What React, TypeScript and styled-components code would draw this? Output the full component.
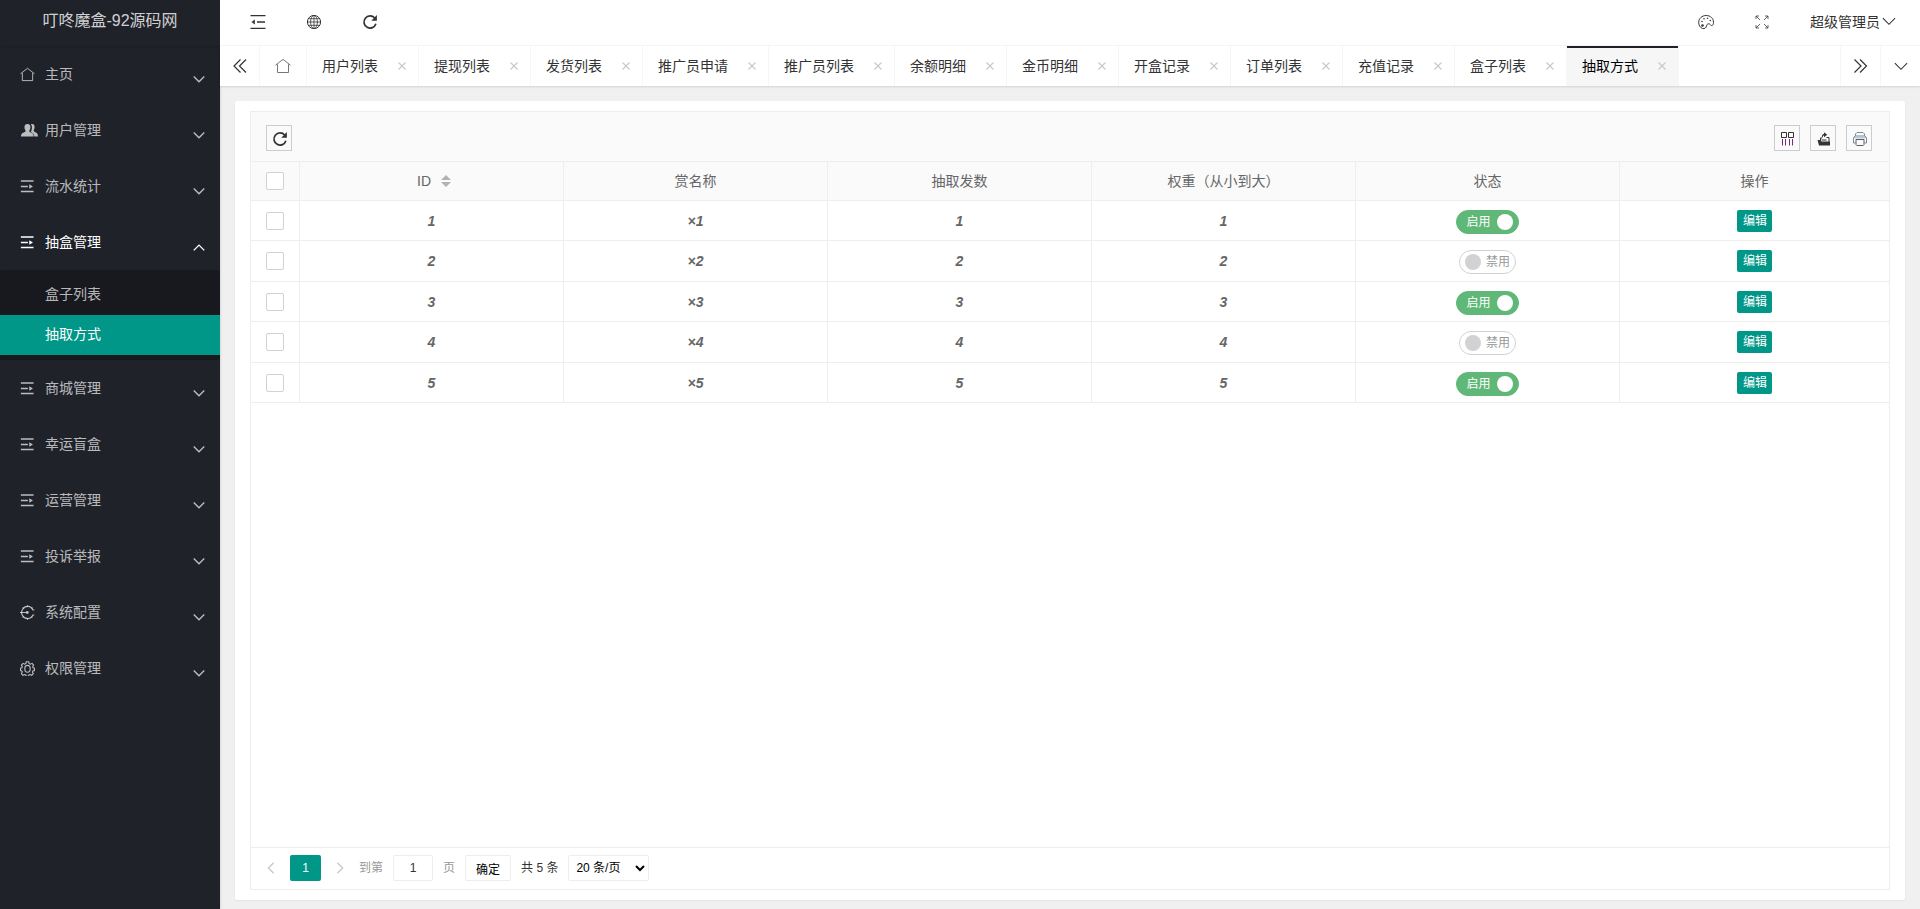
import React, { useState } from "react";
import styled, { createGlobalStyle, css } from "styled-components";

const teal = "#009688";
const dark = "#20222a";
const line = "#eeeeee";

const GlobalStyle = createGlobalStyle`
  * { box-sizing: border-box; }
  body {
    margin: 0;
    background: #f0f0f0;
    color: #333;
    font: 14px/24px "Liberation Sans", "Noto Sans CJK SC", sans-serif;
  }
  button, input, select { font-family: inherit; margin: 0; }
  button { padding: 0; border: 0; background: none; color: inherit; cursor: pointer; }
  a { color: inherit; text-decoration: none; }
  svg { display: block; flex: none; }
`;

/* ---------- icons ---------- */

type IconProps = { size?: number };

const Svg = ({ size = 16, children }: IconProps & { children: React.ReactNode }) => (
  <svg width={size} height={size} viewBox="0 0 16 16" fill="none" stroke="currentColor" aria-hidden="true">
    {children}
  </svg>
);

const HomeIcon = ({ size = 16 }: IconProps) => (
  <Svg size={size}>
    <path d="M.5 7.200 8 1.400l7.500 5.800M2.500 6.200V14.500h11V6.200" strokeWidth="1" />
  </Svg>
);
const UsersIcon = () => (
  <svg width="18" height="14" viewBox="0 0 18 14" fill="currentColor" aria-hidden="true">
    <path d="M10.900 1.300c2.200-.9 3.900.5 3.700 2.900-.1 1.400-.4 2-.8 2.700-.3 1 .2 1.700 1.500 2.300 1.700.7 2.600 1.500 2.700 4.300h-3.700c-.2-2-.6-3.100-2.500-4-.8-.4-1-.9-.6-1.600 1-1.800 1.200-4.600-.3-6.600z" />
    <path d="M7.500.9c2.200 0 3.200 1.600 2.900 3.800-.1 1.300-.5 1.900-1 2.700-.3 1 .2 1.500 1.400 2 2.100.8 2.800 1.400 2.900 4.100H1c0-2.700.8-3.400 2.900-4.100 1.300-.5 1.900-1 1.600-2-.5-.8-.9-1.400-1-2.700C4.200 2.500 5.300.9 7.500.9z" />
  </svg>
);
const ListIcon = () => (
  <Svg size={14}>
    <path d="M1 2.300h14.500M1 8.500h8M1 14.300h14.500" strokeWidth="1.600" />
    <path d="M10.600 5.900 14.800 8.500l-4.200 2.600z" fill="currentColor" stroke="none" />
  </Svg>
);
const ConfigIcon = () => (
  <Svg size={15}>
    <path d="M13.800 5A6.300 6.300 0 0 0 2.600 4.800C2 5.800 1.700 6.800 1.700 8c0 1.200.3 2.200.9 3.200A6.300 6.300 0 0 0 13.800 11" strokeWidth="1.200" />
    <path d="M0 8h7" strokeWidth="1.100" />
    <circle cx="7.800" cy="8" r="1.500" fill="currentColor" stroke="none" />
    <path d="M8 .3v1.500M8 14.200v1.500M3 2.600l1 1.200M13 2.600l-1 1.200M3 13.400l1-1.200M13 13.400l-1-1.200M13 5.300h2.300M13 10.700h2.300" strokeWidth="1" />
  </Svg>
);
const GearIcon = () => (
  <Svg size={15}>
    <path
      d="M6.700.8h2.600l.5 2 1.200.6 1.900-.9 1.600 1.900-1 1.700.4 1.200 1.500.4v2.400l-1.700.5-.4 1.300.9 1.700-1.700 1.700-1.700-.9-1.300.5-.5 1.500H6.700l-.5-1.500-1.200-.5-1.800.9-1.700-1.700.9-1.800-.4-1.200-1.500-.5V7.700L2 7.300l.4-1.300-.9-1.700 1.700-1.800 1.700.9 1.300-.6z"
      strokeWidth="1.200"
    />
    <ellipse cx="8" cy="8.300" rx="2.900" ry="3.700" strokeWidth="1.200" />
  </Svg>
);
const Chevron = ({ size = 12, dir = "down" }: IconProps & { dir?: "down" | "up" | "left" | "right" }) => {
  const d = {
    down: "M1 4.800 8 11.800l7-7",
    up: "M1 12.500l7-7 7 7",
    left: "M11.500 1 4.500 8l7 7",
    right: "M4.500 1l7 7-7 7",
  }[dir];
  return (
    <Svg size={size}>
      <path d={d} strokeWidth={size > 12 ? 1.2 : 1.800} />
    </Svg>
  );
};
const DoubleChevron = ({ flip }: { flip?: boolean }) => (
  <Svg>
    <path d={flip ? "M1.500 1.500 8 8l-6.500 6.500M7 1.500 13.500 8 7 14.500" : "M8.500 1.500 2 8l6.500 6.500M14 1.500 7.500 8l6.500 6.500"} strokeWidth="1.200" />
  </Svg>
);
const FoldIcon = () => (
  <Svg>
    <path d="M.5 1.700h15M7 8h8M.5 14.300h15" strokeWidth="1.300" />
    <path d="M4.800 5.600v4.800L1.500 8z" fill="currentColor" stroke="none" />
  </Svg>
);
const GlobeIcon = () => (
  <Svg>
    <circle cx="8" cy="8" r="6.600" strokeWidth="1" />
    <ellipse cx="8" cy="8" rx="3.400" ry="6.600" strokeWidth=".8" />
    <path d="M8 1.400v13.200M1.400 8h13.200M2.300 4.700h11.400M2.300 11.300h11.400" strokeWidth=".8" />
  </Svg>
);
const RefreshIcon = () => (
  <Svg>
    <path d="M12.700 4A6.100 6.100 0 1 0 13.900 9.800" strokeWidth="1.700" />
    <path d="M14.900 1v5.800H9.300z" fill="currentColor" stroke="none" />
  </Svg>
);
const PaletteIcon = () => (
  <Svg>
    <path d="M4.500 14.500C2 13.500.6 11 .7 8.300.8 4.400 4 1.500 8.200 1.500c4.300 0 7.300 3 7.300 6.700 0 2.300-.8 3.500-1.800 3.400-1.300-.1-1.400-1.800-3-1.800-1.500 0-1.800.9-2.200 2.100-.5 1.900-1.600 3.300-4 2.600z" strokeWidth="1" />
    <g fill="currentColor" stroke="none">
      <circle cx="4.500" cy="11.500" r="1.300" />
      <circle cx="4" cy="7.500" r=".8" />
      <circle cx="6" cy="4.800" r=".8" />
      <circle cx="9.500" cy="4.300" r=".8" />
      <circle cx="12.300" cy="6.500" r=".8" />
    </g>
  </Svg>
);
const FullscreenIcon = () => (
  <Svg>
    <path d="M2 5V2h3M11 2h3v3M14 11v3h-3M5 14H2v-3M2 2l4 4M14 2l-4 4M14 14l-4-4M2 14l4-4" strokeWidth="1" opacity=".75" />
  </Svg>
);
const CloseIcon = () => (
  <Svg size={8}>
    <path d="M1 1l14 14M15 1 1 15" strokeWidth="2.200" />
  </Svg>
);
const ColumnsIcon = () => (
  <Svg>
    <path d="M1.500 1.500h5v5h-5zM8.500 1.500h5v5h-5z" strokeWidth="1" />
    <path d="M2.500 8v6.500M5.500 8v6.500M9.500 8v6.500M12.500 8v6.500" strokeWidth="1" stroke="#7a2a7a" />
  </Svg>
);
const ExportIcon = () => (
  <Svg>
    <path d="M1.500 9h3l1 1.500h8.500V14.500H3z" fill="currentColor" stroke="none" />
    <path d="M4.500 9.500V7H6M10.500 6.500h2.500V11M5.500 9h5" strokeWidth="1" />
    <path d="M5.800 6.500C5.800 4 6.500 3 8 2.900V1.200l3.200 2.600L8 6.200V4.600c-1 .1-1.300.8-1.200 1.900z" fill="currentColor" stroke="none" />
  </Svg>
);
const PrintIcon = () => (
  <Svg>
    <path d="M3.500 5V3L5 1.500h6L12.500 3v2M3.500 12H1.500V6.500L3 5h10l1.500 1.500V12h-2" strokeWidth="1" stroke="#7d8893" />
    <path d="M4 8.500h8v5.200l-.8.800H4.800l-.8-.8z" strokeWidth="1" stroke="#555d66" />
    <path d="M1.500 6.800h13" strokeWidth="1" stroke="#9db4ca" />
  </Svg>
);
const SortIcon = () => (
  <svg width="10" height="14" viewBox="0 0 10 14" fill="#b2b2b2" aria-hidden="true">
    <path d="M5 1l5 5H0zM5 13l5-5H0z" />
  </svg>
);

/* ---------- layout ---------- */

const Shell = styled.div`
  display: flex;
  min-height: 100vh;
`;

const Sidebar = styled.aside`
  flex: none;
  width: 220px;
  background: ${dark};
  color: rgba(255, 255, 255, 0.7);
  box-shadow: 1px 0 2px rgba(0, 0, 0, 0.1);
`;

const Brand = styled.div`
  height: 46px;
  padding-bottom: 4px;
  display: flex;
  align-items: center;
  justify-content: center;
  font-size: 16px;
  color: rgba(255, 255, 255, 0.8);
  box-shadow: 0 1px 2px rgba(0, 0, 0, 0.15);
`;

const MenuButton = styled.button<{ $open?: boolean }>`
  width: 100%;
  height: 56px;
  padding: 0 15px 0 20px;
  display: grid;
  grid-template-columns: 25px 1fr auto;
  align-items: center;
  text-align: left;
  font-size: 14px;
  color: ${(p) => (p.$open ? "#fff" : "inherit")};
`;

const MenuText = styled.span`
  padding-bottom: 2px;
`;

const MenuArrow = styled.span`
  padding-top: 10px;
`;

const SubMenu = styled.div`
  padding: 5px 0;
  border-radius: 2px;
  background: #18191f;
`;

const SubLink = styled.a<{ $active?: boolean }>`
  display: block;
  height: 40px;
  padding-left: 45px;
  line-height: 38px;
  ${(p) => p.$active && css`background: ${teal}; color: #fff;`}
`;

const Main = styled.div`
  flex: 1;
  min-width: 0;
  display: flex;
  flex-direction: column;
`;

const Header = styled.header`
  height: 46px;
  padding-left: 10px;
  padding-bottom: 1px;
  display: flex;
  align-items: center;
  background: #fff;
  border-bottom: 1px solid #f6f6f6;
`;

const HeaderButton = styled.button`
  width: 56px;
  height: 44px;
  display: grid;
  place-items: center;
`;

const Spacer = styled.div`
  flex: 1;
`;

const UserButton = styled.button`
  height: 44px;
  padding: 0 24px 2px 20px;
  display: flex;
  align-items: center;
  gap: 2px;
  font-size: 14px;
`;

const TabBar = styled.nav`
  height: 40px;
  display: flex;
  background: #fff;
  box-shadow: 0 1px 2px rgba(0, 0, 0, 0.12);
`;

const TabControl = styled.button<{ $side: "left" | "right" }>`
  flex: none;
  width: 40px;
  display: grid;
  place-items: center;
  ${(p) => (p.$side === "left" ? "border-right" : "border-left")}: 1px solid #f6f6f6;
`;

const HomeTab = styled.a`
  flex: none;
  width: 47px;
  display: grid;
  place-items: center;
  border-right: 1px solid #f6f6f6;
  color: #777;
`;

const Tabs = styled.div`
  flex: 1;
  min-width: 0;
  display: flex;
  overflow: hidden;
`;

const Tab = styled.div<{ $active?: boolean }>`
  flex: none;
  display: flex;
  align-items: center;
  gap: 16px;
  padding: 0 8px 0 15px;
  border-right: 1px solid #f6f6f6;
  ${(p) => p.$active && css`
    background: #f6f6f6;
    color: #000;
    box-shadow: inset 0 2px ${dark};
  `}
`;

const TabClose = styled.button`
  width: 16px;
  height: 16px;
  display: grid;
  place-items: center;
  color: #c8c8c8;
`;

const Content = styled.main`
  flex: 1;
  padding: 15px 15px 9px;
  display: flex;
`;

const Card = styled.section`
  flex: 1;
  min-width: 0;
  padding: 10px 15px;
  display: flex;
  background: #fff;
  border-radius: 2px;
  box-shadow: 0 1px 2px rgba(0, 0, 0, 0.05);
`;

const Panel = styled.div`
  flex: 1;
  min-width: 0;
  display: flex;
  flex-direction: column;
  border: 1px solid ${line};
`;

const Toolbar = styled.div`
  height: 50px;
  padding: 3px 17px 0 15px;
  display: flex;
  align-items: center;
  gap: 10px;
  background: #fafafa;
  border-bottom: 1px solid ${line};
`;

const ToolButton = styled.button`
  width: 26px;
  height: 26px;
  padding: 2px 0 0 2px;
  display: grid;
  place-items: center;
  border: 1px solid #ccc;
  color: #333;
`;

const Table = styled.table`
  width: 100%;
  table-layout: fixed;
  border-collapse: separate;
  border-spacing: 0;
  color: #666;
`;

const Th = styled.th<{ $width?: number }>`
  width: ${(p) => (p.$width ? `${p.$width}px` : "auto")};
  height: 39px;
  padding: 0;
  font-weight: 400;
  background: #fafafa;
  border: solid ${line};
  border-width: 0 1px 1px 0;
  &:last-child { border-right: 0; }
`;

const Tr = styled.tr`
  height: 40px;
  &:nth-child(even) { height: 41px; }
`;

const Td = styled.td`
  padding: 9px 0 0;
  text-align: center;
  vertical-align: top;
  line-height: 22px;
  border: solid ${line};
  border-width: 0 1px 1px 0;
  &:last-child { border-right: 0; }
`;

const Value = styled.em`
  display: block;
  font-weight: 700;
`;

const HeadCell = styled.div`
  display: flex;
  align-items: center;
  justify-content: center;
`;

const SortButton = styled.button`
  margin: 0 -5px 0 10px;
`;

const CheckCell = styled.div`
  display: flex;
  padding: 2px 0 0 15px;
  ${Th} & { padding-top: 0; }
`;

const Check = styled.input`
  appearance: none;
  width: 18px;
  height: 18px;
  border: 1px solid #d2d2d2;
  border-radius: 2px;
  background: #fff;
  &:checked { background: ${teal}; border-color: ${teal}; }
`;

const SwitchLabel = styled.label<{ $on: boolean }>`
  display: inline-flex;
  flex-direction: ${(p) => (p.$on ? "row" : "row-reverse")};
  align-items: center;
  gap: ${(p) => (p.$on ? 6 : 5)}px;
  height: 24px;
  padding: ${(p) => (p.$on ? "0 5px 0 9px" : "0 5px")};
  border: 1px solid ${(p) => (p.$on ? "#5fb878" : "#d2d2d2")};
  border-radius: 20px;
  background: ${(p) => (p.$on ? "#5fb878" : "#fff")};
  color: ${(p) => (p.$on ? "#fff" : "#999")};
  font-size: 12px;
  vertical-align: top;
  cursor: pointer;
`;

const SwitchInput = styled.input`
  appearance: none;
  width: 16px;
  height: 16px;
  border-radius: 50%;
  background: #d2d2d2;
  &:checked { background: #fff; }
`;

const EditButton = styled.button`
  height: 22px;
  padding: 0 5px 0 6px;
  border-radius: 2px;
  background: ${teal};
  color: #fff;
  font-size: 12px;
  line-height: 22px;
  vertical-align: top;
`;

const Pager = styled.footer`
  height: 42px;
  margin-top: auto;
  padding: 7px 1px;
  display: flex;
  align-items: flex-start;
  border-top: 1px solid ${line};
  font-size: 12px;
  line-height: 26px;
`;

const PagerArrow = styled.button`
  width: 38px;
  height: 26px;
  display: grid;
  place-items: center;
  color: #c8c8c8;
`;

const PageNumber = styled.button`
  width: 31px;
  height: 26px;
  border-radius: 2px;
  background: ${teal};
  color: #fff;
  font-size: 12px;
`;

const JumpLabel = styled.label`
  display: flex;
  gap: 10px;
  padding-right: 10px;
  color: #999;
`;

const JumpInput = styled.input`
  width: 40px;
  height: 26px;
  padding: 0;
  border: 1px solid ${line};
  border-radius: 2px;
  text-align: center;
  font-size: 12px;
  color: #333;
`;

const JumpButton = styled.button`
  height: 26px;
  padding: 0 10px;
  border: 1px solid ${line};
  border-radius: 2px;
  font-size: 12px;
  color: #000;
`;

const Total = styled.span`
  padding: 0 10px;
`;

const SizeSelect = styled.select`
  width: 81px;
  height: 26px;
  padding: 0 3px;
  border: 1px solid ${line};
  border-radius: 2px;
  background: #fff;
  color: #000;
  font-size: 12px;
`;

/* ---------- data ---------- */

type MenuEntry = { label: string; icon: React.ReactNode; children?: string[] };

const menu: MenuEntry[] = [
  { label: "主页", icon: <HomeIcon size={15} /> },
  { label: "用户管理", icon: <UsersIcon /> },
  { label: "流水统计", icon: <ListIcon /> },
  { label: "抽盒管理", icon: <ListIcon />, children: ["盒子列表", "抽取方式"] },
  { label: "商城管理", icon: <ListIcon /> },
  { label: "幸运盲盒", icon: <ListIcon /> },
  { label: "运营管理", icon: <ListIcon /> },
  { label: "投诉举报", icon: <ListIcon /> },
  { label: "系统配置", icon: <ConfigIcon /> },
  { label: "权限管理", icon: <GearIcon /> },
];

const current = "抽取方式";

const tabs = [
  "用户列表", "提现列表", "发货列表", "推广员申请", "推广员列表", "余额明细",
  "金币明细", "开盒记录", "订单列表", "充值记录", "盒子列表", current,
];

const rows = [
  { id: 1, enabled: true },
  { id: 2, enabled: false },
  { id: 3, enabled: true },
  { id: 4, enabled: false },
  { id: 5, enabled: true },
];

/* ---------- parts ---------- */

const StatusSwitch = ({ initial }: { initial: boolean }) => {
  const [on, setOn] = useState(initial);
  return (
    <SwitchLabel $on={on}>
      {on ? "启用" : "禁用"}
      <SwitchInput type="checkbox" role="switch" checked={on} onChange={() => setOn(!on)} />
    </SwitchLabel>
  );
};

const SideMenu = () => (
  <Sidebar>
    <Brand>叮咚魔盒-92源码网</Brand>
    <nav>
      {menu.map(({ label, icon, children }) => (
        <div key={label}>
          <MenuButton $open={!!children} aria-expanded={!!children}>
            {icon}
            <MenuText>{label}</MenuText>
            <MenuArrow>
              <Chevron dir={children ? "up" : "down"} />
            </MenuArrow>
          </MenuButton>
          {children && (
            <SubMenu>
              {children.map((child) => (
                <SubLink key={child} href="#" $active={child === current}>
                  {child}
                </SubLink>
              ))}
            </SubMenu>
          )}
        </div>
      ))}
    </nav>
  </Sidebar>
);

const DataTable = () => (
  <Table>
    <thead>
      <tr>
        <Th $width={49}>
          <CheckCell>
            <Check type="checkbox" aria-label="全选" />
          </CheckCell>
        </Th>
        <Th>
          <HeadCell>
            ID
            <SortButton aria-label="排序">
              <SortIcon />
            </SortButton>
          </HeadCell>
        </Th>
        <Th>赏名称</Th>
        <Th>抽取发数</Th>
        <Th>权重（从小到大）</Th>
        <Th>状态</Th>
        <Th $width={269}>操作</Th>
      </tr>
    </thead>
    <tbody>
      {rows.map(({ id, enabled }) => (
        <Tr key={id}>
          <Td>
            <CheckCell>
              <Check type="checkbox" aria-label={`选择 ${id}`} />
            </CheckCell>
          </Td>
          <Td><Value>{id}</Value></Td>
          <Td><Value>×{id}</Value></Td>
          <Td><Value>{id}</Value></Td>
          <Td><Value>{id}</Value></Td>
          <Td><StatusSwitch initial={enabled} /></Td>
          <Td><EditButton>编辑</EditButton></Td>
        </Tr>
      ))}
    </tbody>
  </Table>
);

export default function App() {
  return (
    <>
      <GlobalStyle />
      <Shell>
        <SideMenu />
        <Main>
          <Header>
            <HeaderButton aria-label="侧边伸缩"><FoldIcon /></HeaderButton>
            <HeaderButton aria-label="前台"><GlobeIcon /></HeaderButton>
            <HeaderButton aria-label="刷新"><RefreshIcon /></HeaderButton>
            <Spacer />
            <HeaderButton aria-label="主题"><PaletteIcon /></HeaderButton>
            <HeaderButton aria-label="全屏"><FullscreenIcon /></HeaderButton>
            <UserButton>
              超级管理员
              <Chevron size={14} />
            </UserButton>
          </Header>
          <TabBar>
            <TabControl $side="left" aria-label="向左"><DoubleChevron /></TabControl>
            <HomeTab href="#" aria-label="主页"><HomeIcon /></HomeTab>
            <Tabs>
              {tabs.map((tab) => (
                <Tab key={tab} $active={tab === current}>
                  <a href="#">{tab}</a>
                  <TabClose aria-label={`关闭 ${tab}`}><CloseIcon /></TabClose>
                </Tab>
              ))}
            </Tabs>
            <TabControl $side="right" aria-label="向右"><DoubleChevron flip /></TabControl>
            <TabControl $side="right" aria-label="更多"><Chevron size={14} /></TabControl>
          </TabBar>
          <Content>
            <Card>
              <Panel>
                <Toolbar>
                  <ToolButton aria-label="刷新"><RefreshIcon /></ToolButton>
                  <Spacer />
                  <ToolButton aria-label="筛选列"><ColumnsIcon /></ToolButton>
                  <ToolButton aria-label="导出"><ExportIcon /></ToolButton>
                  <ToolButton aria-label="打印"><PrintIcon /></ToolButton>
                </Toolbar>
                <DataTable />
                <Pager>
                  <PagerArrow aria-label="上一页"><Chevron dir="left" /></PagerArrow>
                  <PageNumber>1</PageNumber>
                  <PagerArrow aria-label="下一页"><Chevron dir="right" /></PagerArrow>
                  <JumpLabel>
                    到第
                    <JumpInput type="text" defaultValue="1" />
                    页
                  </JumpLabel>
                  <JumpButton>确定</JumpButton>
                  <Total>共 5 条</Total>
                  <SizeSelect aria-label="每页条数" defaultValue="20">
                    <option value="20">20 条/页</option>
                    <option value="50">50 条/页</option>
                  </SizeSelect>
                </Pager>
              </Panel>
            </Card>
          </Content>
        </Main>
      </Shell>
    </>
  );
}
